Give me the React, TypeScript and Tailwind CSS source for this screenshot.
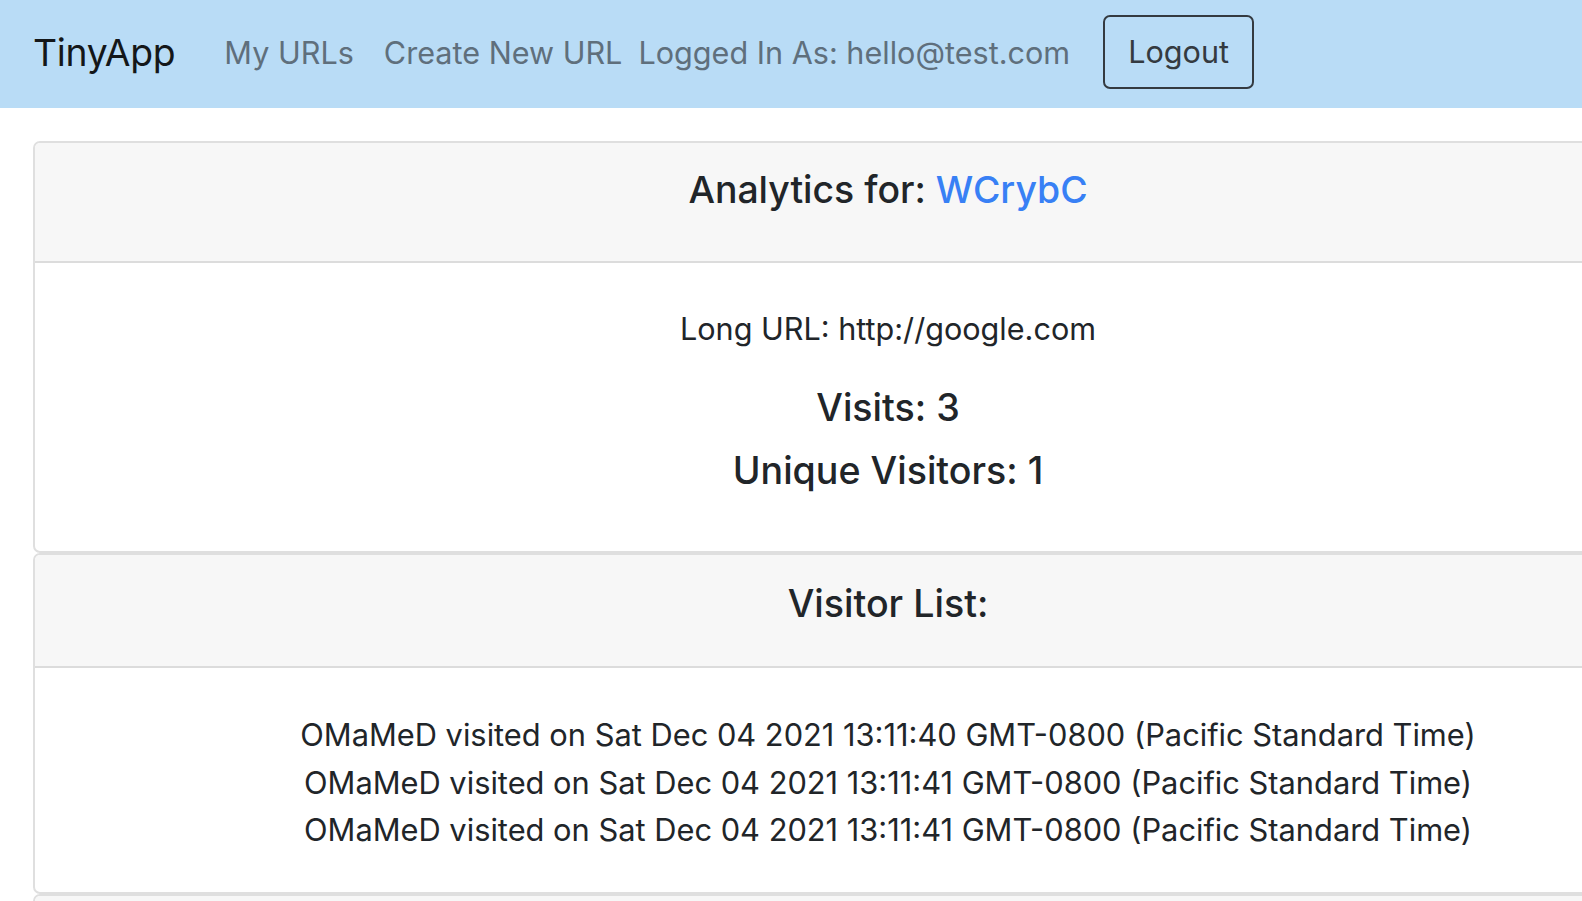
import React from 'react';

const visits = [
  'OMaMeD visited on Sat Dec 04 2021 13:11:40 GMT-0800 (Pacific Standard Time)',
  'OMaMeD visited on Sat Dec 04 2021 13:11:41 GMT-0800 (Pacific Standard Time)',
  'OMaMeD visited on Sat Dec 04 2021 13:11:41 GMT-0800 (Pacific Standard Time)',
];

const App: React.FC = () => {
  return (
    <div
      className="min-h-screen w-full overflow-hidden bg-white text-[#212529]"
      style={{ fontFamily: 'Inter, "Noto Sans", sans-serif' }}
    >
      {/* Navbar */}
      <nav className="h-[108px] bg-[#b9dcf6] flex items-center pl-[33px]">
        <span className="text-[37.3px] text-[#141719] tracking-[-0.3px] -mt-[2px]">TinyApp</span>
        <span className="ml-[49px] text-[30.6px] text-[#5f6f7c] -mt-[2px]">My URLs</span>
        <span className="ml-[30px] text-[30.6px] text-[#5f6f7c] -mt-[2px]">Create New URL</span>
        <span className="ml-[16px] text-[30.6px] text-[#5f6f7c] -mt-[2px]">Logged In As: hello@test.com</span>
        <button className="ml-[33px] w-[151px] h-[74px] -mt-[4px] border-2 border-[#343a40] rounded-[7px] text-[30.6px] text-[#343a40]">
          Logout
        </button>
      </nav>

      {/* Cards */}
      <div className="pl-[33px] pt-[33px]">
        {/* Analytics card */}
        <div className="w-[1710px] border-2 border-[#dfdfdf] rounded-[7px] overflow-hidden">
          <div className="bg-[#f7f7f7] border-b-2 border-[#dcdcdc] pt-[24px] pb-[48px] text-center">
            <h3 className="text-[37.4px] leading-[46px] font-medium">
              Analytics for: <span className="text-[#3880f5]">WCrybC</span>
            </h3>
          </div>
          <div className="pt-[44px] pb-[57px] flex flex-col items-center">
            <p className="text-[30.6px] leading-[44px]">Long URL: http://google.com</p>
            <h4 className="mt-[34px] text-[37.6px] leading-[46px] font-medium">Visits: 3</h4>
            <h4 className="mt-[17px] text-[37.6px] leading-[46px] font-medium">Unique Visitors: 1</h4>
          </div>
        </div>

        {/* Visitor list card */}
        <div className="w-[1710px] border-2 border-[#dfdfdf] rounded-[7px] overflow-hidden">
          <div className="bg-[#f7f7f7] border-b-2 border-[#dcdcdc] pt-[26px] pb-[39px] text-center">
            <h3 className="text-[37.6px] leading-[46px] font-medium">Visitor List:</h3>
          </div>
          <div className="pt-[43px] pb-[38px] flex flex-col items-center">
            {visits.map((v, i) => (
              <p key={i} className="text-[30.8px] leading-[47.5px]">
                {v}
              </p>
            ))}
          </div>
        </div>

        {/* next card, cut off by the window */}
        <div className="w-[1710px] border-2 border-[#dfdfdf] rounded-[7px] overflow-hidden">
          <div className="bg-[#f7f7f7] h-[120px]" />
        </div>
      </div>
    </div>
  );
};

export default App;
